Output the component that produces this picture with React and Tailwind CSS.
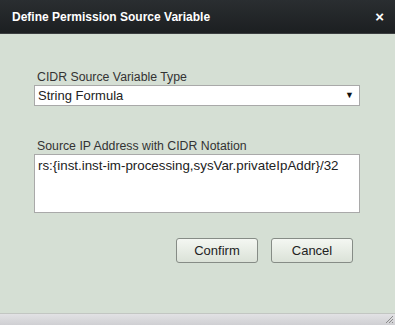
import React from 'react'

const App = () => {
  return (
    <div className="w-[395px] h-[325px] flex flex-col bg-[#d5dfd4] font-['Liberation_Sans',Arial,sans-serif] overflow-hidden">
      {/* title bar */}
      <div className="h-[34px] flex items-center justify-between pl-[12px] pr-[11px] bg-gradient-to-b from-[#2a2e31] to-[#1c1f21] border-b border-[#3b3e40]">
        <span className="text-white text-[12px] font-bold">Define Permission Source Variable</span>
        <span className="text-white text-[15px] font-bold leading-none">×</span>
      </div>

      {/* body */}
      <div className="flex-1 flex flex-col pl-[34px] pr-[35px]">
        <label className="mt-[35px] pl-[3px] text-[12.3px] leading-[16px] text-[#333]">CIDR Source Variable Type</label>
        <div className="h-[21px] flex items-center justify-between bg-white border border-[#a9a9a9] pl-[3px] pr-[5px] text-[13px] text-[#222]">
          <span>String Formula</span>
          <span className="text-[9px] text-[#111]">▼</span>
        </div>

        <label className="mt-[32px] pl-[3px] text-[12.3px] leading-[16px] text-[#333]">Source IP Address with CIDR Notation</label>
        <div className="h-[59px] bg-white border border-[#a9a9a9] px-[3px] pt-[3px] text-[13.33px] leading-[16px] text-[#222]">
          rs:{'{'}inst.inst-im-processing,sysVar.privateIpAddr{'}'}/32
        </div>

        <div className="mt-[25px] flex justify-end gap-[13px] pr-[7px]">
          <button className="w-[82px] h-[25px] rounded-[3px] border border-[#868c86] bg-gradient-to-b from-[#f4f7f2] to-[#dbe2d8] text-[13px] text-[#222]">Confirm</button>
          <button className="w-[82px] h-[25px] rounded-[3px] border border-[#868c86] bg-gradient-to-b from-[#f4f7f2] to-[#dbe2d8] text-[13px] text-[#222]">Cancel</button>
        </div>
      </div>

      {/* footer */}
      <div className="h-[12px] relative border-t border-[#c2c6c2] bg-gradient-to-b from-[#e2e2e4] to-[#cfcfd3]">
        <svg className="absolute right-[1px] bottom-[1px]" width="10" height="10" viewBox="0 0 10 10">
          <path d="M9 2 L2 9 M9 5 L5 9 M9 8 L8 9" stroke="#8a8a8a" strokeWidth="1" />
        </svg>
      </div>
    </div>
  )
}

export default App
